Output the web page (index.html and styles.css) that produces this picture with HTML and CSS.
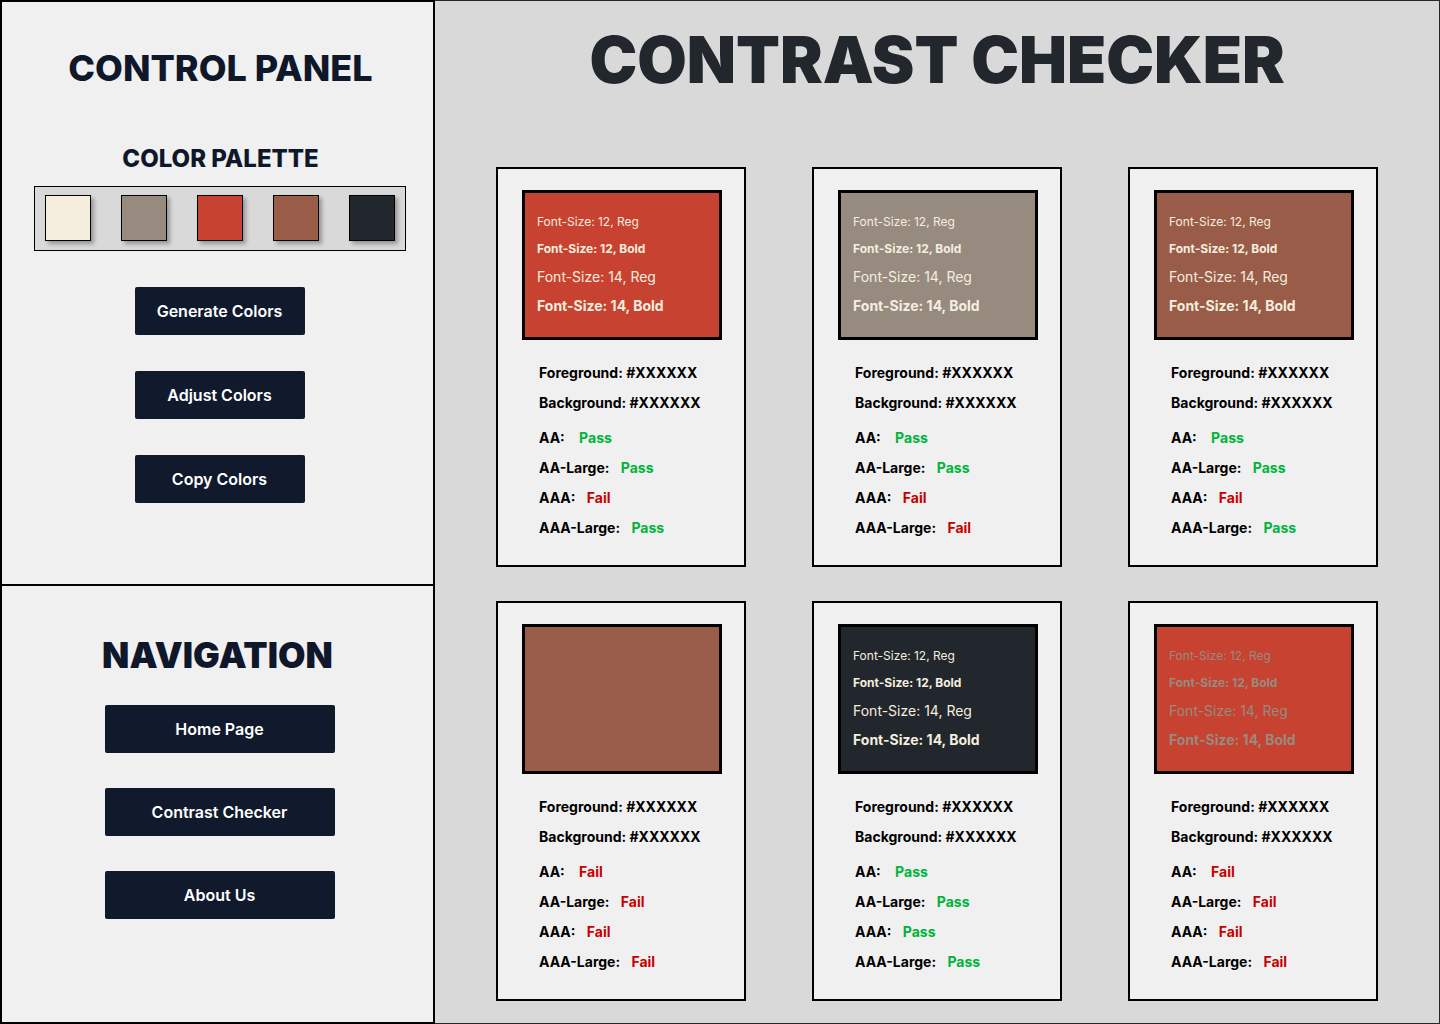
FILE: index.html
```html
<!DOCTYPE html>
<html>
	<head>
		<meta charset="utf-8" />
		<title>Contrast Checker</title>
		<link rel="stylesheet" href="styles.css">
	</head>
	<body>
		<div id="page">
			<div id="sidebar">
				<div id="control-panel">
					<h1 class="panel-titles">CONTROL PANEL</h1>
					<h2 class="sub-titles">COLOR PALETTE</h2>
					<div class="palette">
						<div class="swatches cream"></div>
						<div class="swatches taupe"></div>
						<div class="swatches red"></div>
						<div class="swatches brown"></div>
						<div class="swatches dark"></div>
					</div>
					<div class="button-list">
						<div class="buttons">Generate Colors</div>
						<div class="buttons">Adjust Colors</div>
						<div class="buttons">Copy Colors</div>
					</div>
				</div>
				<div id="navigation">
					<h1 class="panel-titles nav-title">NAVIGATION</h1>
					<div class="button-list">
						<div class="buttons nav-buttons">Home Page</div>
						<div class="buttons nav-buttons">Contrast Checker</div>
						<div class="buttons nav-buttons">About Us</div>
					</div>
				</div>
			</div>
			<div id="main">
				<h1 id="main-title">CONTRAST CHECKER</h1>
				<div class="card-grid">
					<div class="cards">
						<div class="samples red text-cream">
							<div class="s12">Font-Size: 12, Reg</div>
							<div class="s12 bold">Font-Size: 12, Bold</div>
							<div class="s14">Font-Size: 14, Reg</div>
							<div class="s14 bold">Font-Size: 14, Bold</div>
						</div>
						<div class="info">
							<div>Foreground: #XXXXXX</div>
							<div>Background: #XXXXXX</div>
							<div class="gap">AA: <span class="pass first">Pass</span></div>
							<div>AA-Large: <span class="pass">Pass</span></div>
							<div>AAA: <span class="fail">Fail</span></div>
							<div>AAA-Large: <span class="pass">Pass</span></div>
						</div>
					</div>
					<div class="cards">
						<div class="samples taupe text-cream">
							<div class="s12">Font-Size: 12, Reg</div>
							<div class="s12 bold">Font-Size: 12, Bold</div>
							<div class="s14">Font-Size: 14, Reg</div>
							<div class="s14 bold">Font-Size: 14, Bold</div>
						</div>
						<div class="info">
							<div>Foreground: #XXXXXX</div>
							<div>Background: #XXXXXX</div>
							<div class="gap">AA: <span class="pass first">Pass</span></div>
							<div>AA-Large: <span class="pass">Pass</span></div>
							<div>AAA: <span class="fail">Fail</span></div>
							<div>AAA-Large: <span class="fail">Fail</span></div>
						</div>
					</div>
					<div class="cards">
						<div class="samples brown text-cream">
							<div class="s12">Font-Size: 12, Reg</div>
							<div class="s12 bold">Font-Size: 12, Bold</div>
							<div class="s14">Font-Size: 14, Reg</div>
							<div class="s14 bold">Font-Size: 14, Bold</div>
						</div>
						<div class="info">
							<div>Foreground: #XXXXXX</div>
							<div>Background: #XXXXXX</div>
							<div class="gap">AA: <span class="pass first">Pass</span></div>
							<div>AA-Large: <span class="pass">Pass</span></div>
							<div>AAA: <span class="fail">Fail</span></div>
							<div>AAA-Large: <span class="pass">Pass</span></div>
						</div>
					</div>
					<div class="cards">
						<div class="samples brown text-brown">
							<div class="s12">Font-Size: 12, Reg</div>
							<div class="s12 bold">Font-Size: 12, Bold</div>
							<div class="s14">Font-Size: 14, Reg</div>
							<div class="s14 bold">Font-Size: 14, Bold</div>
						</div>
						<div class="info">
							<div>Foreground: #XXXXXX</div>
							<div>Background: #XXXXXX</div>
							<div class="gap">AA: <span class="fail first">Fail</span></div>
							<div>AA-Large: <span class="fail">Fail</span></div>
							<div>AAA: <span class="fail">Fail</span></div>
							<div>AAA-Large: <span class="fail">Fail</span></div>
						</div>
					</div>
					<div class="cards">
						<div class="samples dark text-cream">
							<div class="s12">Font-Size: 12, Reg</div>
							<div class="s12 bold">Font-Size: 12, Bold</div>
							<div class="s14">Font-Size: 14, Reg</div>
							<div class="s14 bold">Font-Size: 14, Bold</div>
						</div>
						<div class="info">
							<div>Foreground: #XXXXXX</div>
							<div>Background: #XXXXXX</div>
							<div class="gap">AA: <span class="pass first">Pass</span></div>
							<div>AA-Large: <span class="pass">Pass</span></div>
							<div>AAA: <span class="pass">Pass</span></div>
							<div>AAA-Large: <span class="pass">Pass</span></div>
						</div>
					</div>
					<div class="cards">
						<div class="samples red text-taupe">
							<div class="s12">Font-Size: 12, Reg</div>
							<div class="s12 bold">Font-Size: 12, Bold</div>
							<div class="s14">Font-Size: 14, Reg</div>
							<div class="s14 bold">Font-Size: 14, Bold</div>
						</div>
						<div class="info">
							<div>Foreground: #XXXXXX</div>
							<div>Background: #XXXXXX</div>
							<div class="gap">AA: <span class="fail first">Fail</span></div>
							<div>AA-Large: <span class="fail">Fail</span></div>
							<div>AAA: <span class="fail">Fail</span></div>
							<div>AAA-Large: <span class="fail">Fail</span></div>
						</div>
					</div>
				</div>
			</div>
		</div>
	</body>
</html>
```

FILE: styles.css
```css
body {
	font-family: Inter, "Noto Sans", sans-serif;
	margin: 0px;
	width: 1440px;
	height: 1024px;
	overflow: hidden;
}

#page {
	display: flex;
	width: 1440px;
	height: 1024px;
}

/* sidebar */

#sidebar {
	display: flex;
	flex-direction: column;
	width: 435px;
	height: 1024px;
	box-sizing: border-box;
	border: 2px solid black;
	background-color: #f0f0f0;
}

#control-panel {
	height: 584px;
	box-sizing: border-box;
	padding-top: 44px;
	padding-left: 4px;
	border-bottom: 2px solid black;
	display: flex;
	flex-direction: column;
	align-items: center;
}

#navigation {
	flex: 1;
	padding-top: 48px;
	padding-left: 4px;
	display: flex;
	flex-direction: column;
	align-items: center;
}

.panel-titles {
	margin: 0px 0px 0px 2px;
	font-size: 36px;
	line-height: 44px;
	font-weight: 800;
	color: #0f172a;
	text-align: center;
}

.nav-title {
	font-size: 35.5px;
	font-weight: 900;
	margin-left: -4px;
}

.sub-titles {
	margin: 54px 0px 12px 2px;
	font-size: 24px;
	line-height: 30px;
	font-weight: 800;
	color: #0f172a;
}

.palette {
	display: flex;
	justify-content: space-between;
	width: 372px;
	box-sizing: border-box;
	padding: 8px 10px 9px 10px;
	border: 1px solid black;
	background-color: #d9d9d9;
}

.swatches {
	width: 46px;
	height: 46px;
	box-sizing: border-box;
	border: 1px solid black;
	box-shadow: 3px 3px 4px rgba(0, 0, 0, 0.3);
}

.button-list {
	display: flex;
	flex-direction: column;
	align-items: center;
	gap: 36px;
	margin-top: 36px;
}

#navigation .button-list {
	margin-top: 27px;
	gap: 35px;
}

.buttons {
	width: 170px;
	height: 48px;
	line-height: 48px;
	text-align: center;
	font-size: 16px;
	font-weight: 600;
	color: white;
	background-color: #111a2d;
	border-radius: 2px;
	cursor: pointer;
}

.nav-buttons {
	width: 230px;
}

/* palette colours */

.cream {
	background-color: #f5eedf;
}

.taupe {
	background-color: #978b7f;
}

.red {
	background-color: #c84231;
}

.brown {
	background-color: #995c49;
}

.dark {
	background-color: #22262d;
}

/* main area */

#main {
	flex: 1;
	box-sizing: border-box;
	border: 1px solid #22262d;
	border-left: none;
	background-color: #d9d9d9;
}

#main-title {
	margin: 19px 0px 0px 0px;
	font-size: 64px;
	line-height: 80px;
	font-weight: 900;
	color: #22262d;
	text-align: center;
}

.card-grid {
	display: grid;
	grid-template-columns: repeat(3, 250px);
	justify-content: center;
	column-gap: 66px;
	row-gap: 34px;
	margin-top: 67px;
}

.cards {
	width: 250px;
	height: 400px;
	box-sizing: border-box;
	border: 2px solid black;
	background-color: #f0f0f0;
	padding: 21px 0px 0px 24px;
}

.samples {
	width: 200px;
	height: 150px;
	box-sizing: border-box;
	border: 3px solid black;
	padding: 15px 0px 0px 12px;
}

.s12 {
	font-size: 12px;
	line-height: 27px;
}

.s14 {
	font-size: 14px;
	line-height: 29px;
}

.bold {
	font-weight: 700;
}

.text-cream {
	color: #f5eedf;
}

.text-taupe {
	color: #978b7f;
}

.text-brown {
	color: #995c49;
}

.info {
	margin-top: 18px;
	padding-left: 17px;
	font-size: 14px;
	font-weight: 700;
	line-height: 30px;
	color: black;
}

.info .gap {
	margin-top: 5px;
}

.pass {
	color: #00b33c;
	margin-left: 8px;
}

.fail {
	color: #c80000;
	margin-left: 8px;
}

.first {
	margin-left: 11px;
}
```
